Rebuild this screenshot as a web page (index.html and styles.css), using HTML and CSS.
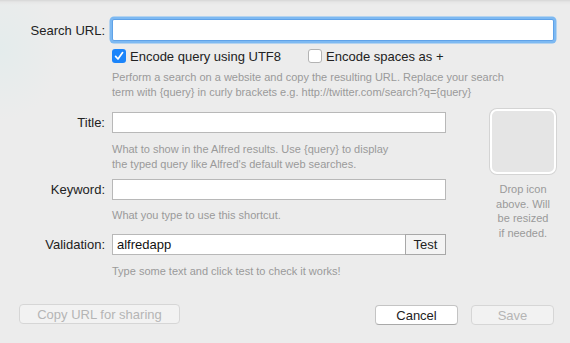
FILE: index.html
```html
<!DOCTYPE html>
<html lang="en">
<head>
  <meta charset="UTF-8">
  <title>Web Search</title>
  <link rel="stylesheet" href="styles.css">
</head>
<body>

  <div class="sheet">
    <div class="row">
      <label class="label" for="searchUrl">Search URL:</label>
      <input type="text" id="searchUrl" class="field field-url">
    </div>

    <div class="checks">
      <label class="check"><span class="box checked">
        <svg width="14" height="14" viewBox="0 0 14 14"><path d="M3.6 7.4 L6 10 L10.6 3.6" fill="none" stroke="#fff" stroke-width="1.7" stroke-linecap="round" stroke-linejoin="round"/></svg>
      </span>Encode query using UTF8</label>
      <label class="check check-second"><span class="box"></span>Encode spaces as +</label>
    </div>

    <p class="hint hint-url">Perform a search on a website and copy the resulting URL. Replace your search<br>term with {query} in curly brackets e.g. http://twitter.com/search?q={query}</p>

    <div class="lower">
      <div class="fields">
        <div class="row row-title">
          <label class="label" for="title">Title:</label>
          <input type="text" id="title" class="field">
        </div>
        <p class="hint hint-title">What to show in the Alfred results. Use {query} to display<br>the typed query like Alfred's default web searches.</p>

        <div class="row row-keyword">
          <label class="label" for="keyword">Keyword:</label>
          <input type="text" id="keyword" class="field">
        </div>
        <p class="hint hint-keyword">What you type to use this shortcut.</p>

        <div class="row row-validation">
          <label class="label" for="validation">Validation:</label>
          <div class="combo">
            <input type="text" id="validation" class="field field-validation" value="alfredapp">
            <button class="test">Test</button>
          </div>
        </div>
        <p class="hint hint-validation">Type some text and click test to check it works!</p>
      </div>

      <div class="icon-col">
        <div class="well"></div>
        <div class="well-note">Drop icon<br>above. Will<br>be resized<br>if needed.</div>
      </div>
    </div>

    <div class="actions">
      <button class="btn btn-copy" disabled>Copy URL for sharing</button>
      <div class="actions-right">
        <button class="btn btn-cancel">Cancel</button>
        <button class="btn btn-save" disabled>Save</button>
      </div>
    </div>
  </div>

</body>
</html>
```

FILE: styles.css
```css
body {
  margin: 0;
  font-family: "Liberation Sans", Arial, sans-serif;
  color: #222;
  background:
    linear-gradient(to bottom, #d6d6d6 0, #e6e6e6 2px, rgba(236,236,236,0) 5px),
    radial-gradient(ellipse 60px 70px at 0 50px, #e4ecec, rgba(236,236,236,0)),
    #ececec;
  width: 570px;
  height: 343px;
  overflow: hidden;
}

.sheet {
  padding: 19px 16px 0 0;
}

.row {
  display: flex;
  align-items: center;
  gap: 7px;
}

.label {
  width: 105px;
  text-align: right;
  font-size: 13px;
  flex-shrink: 0;
}

.field {
  box-sizing: border-box;
  height: 21px;
  width: 334px;
  border: 1px solid #b8b8b8;
  background: #fff;
  font-family: inherit;
  font-size: 13px;
  color: #111;
  padding: 0 4px;
  margin: 0;
  outline: none;
}

.field-url {
  flex: 1;
  height: 22px;
  border: 1px solid #5fa2e8;
  border-radius: 2px;
  box-shadow: 0 0 0 2.5px #7db9f2;
}

.checks {
  display: flex;
  margin: 8px 0 0 112px;
  font-size: 13px;
}

.check {
  display: flex;
  align-items: center;
  gap: 4px;
  height: 14px;
}

.check-second {
  margin-left: 27px;
}

.box {
  box-sizing: border-box;
  width: 14px;
  height: 14px;
  border: 1px solid #b3b3b3;
  border-radius: 3px;
  background: #fff;
  display: flex;
}

.box.checked {
  border: none;
  background: #1b84fa;
}

.hint {
  margin: 0 0 0 112px;
  font-size: 11px;
  line-height: 14.5px;
  color: #9a9a9a;
}

.hint-url { margin-top: 7px; }

.lower {
  display: flex;
  margin-top: 10px;
}

.fields {
  padding-top: 3px;
}

.hint-title { margin-top: 9px; }
.row-keyword { margin-top: 8px; }
.hint-keyword { margin-top: 8px; }
.row-validation { margin-top: 11px; }
.hint-validation { margin-top: 9px; }

.combo {
  display: flex;
}

.field-validation {
  width: 294px;
}

.test {
  box-sizing: border-box;
  height: 21px;
  width: 41px;
  margin-left: -1px;
  border: 1px solid #a8a8a8;
  background: #f4f4f4;
  font-family: inherit;
  font-size: 13px;
  color: #222;
  padding: 0;
}

.icon-col {
  margin-left: 44px;
  width: 66px;
  text-align: center;
}

.well {
  box-sizing: border-box;
  width: 66px;
  height: 65px;
  border: 2px solid #fff;
  border-radius: 7px;
  background: #e5e5e5;
  box-shadow: 0 0 0 1px #d4d4d4;
}

.well-note {
  margin-top: 8px;
  font-size: 11px;
  line-height: 14.5px;
  color: #9a9a9a;
}

.actions {
  display: flex;
  justify-content: space-between;
  align-items: flex-start;
  margin: 26px 0 0 19px;
}

.actions-right {
  display: flex;
  gap: 13px;
  padding-top: 1px;
}

.btn {
  box-sizing: border-box;
  height: 20px;
  border-radius: 4px;
  font-family: inherit;
  font-size: 13px;
  padding: 0;
}

.btn-copy {
  width: 161px;
  border: 1px solid #d6d6d6;
  background: #f2f2f2;
  color: #b5b5b5;
}

.btn-cancel {
  width: 83px;
  border: 1px solid #c4c4c4;
  border-bottom-color: #a9a9a9;
  background: #fff;
  color: #222;
}

.btn-save {
  width: 83px;
  border: 1px solid #d6d6d6;
  background: #f2f2f2;
  color: #b5b5b5;
}
```
